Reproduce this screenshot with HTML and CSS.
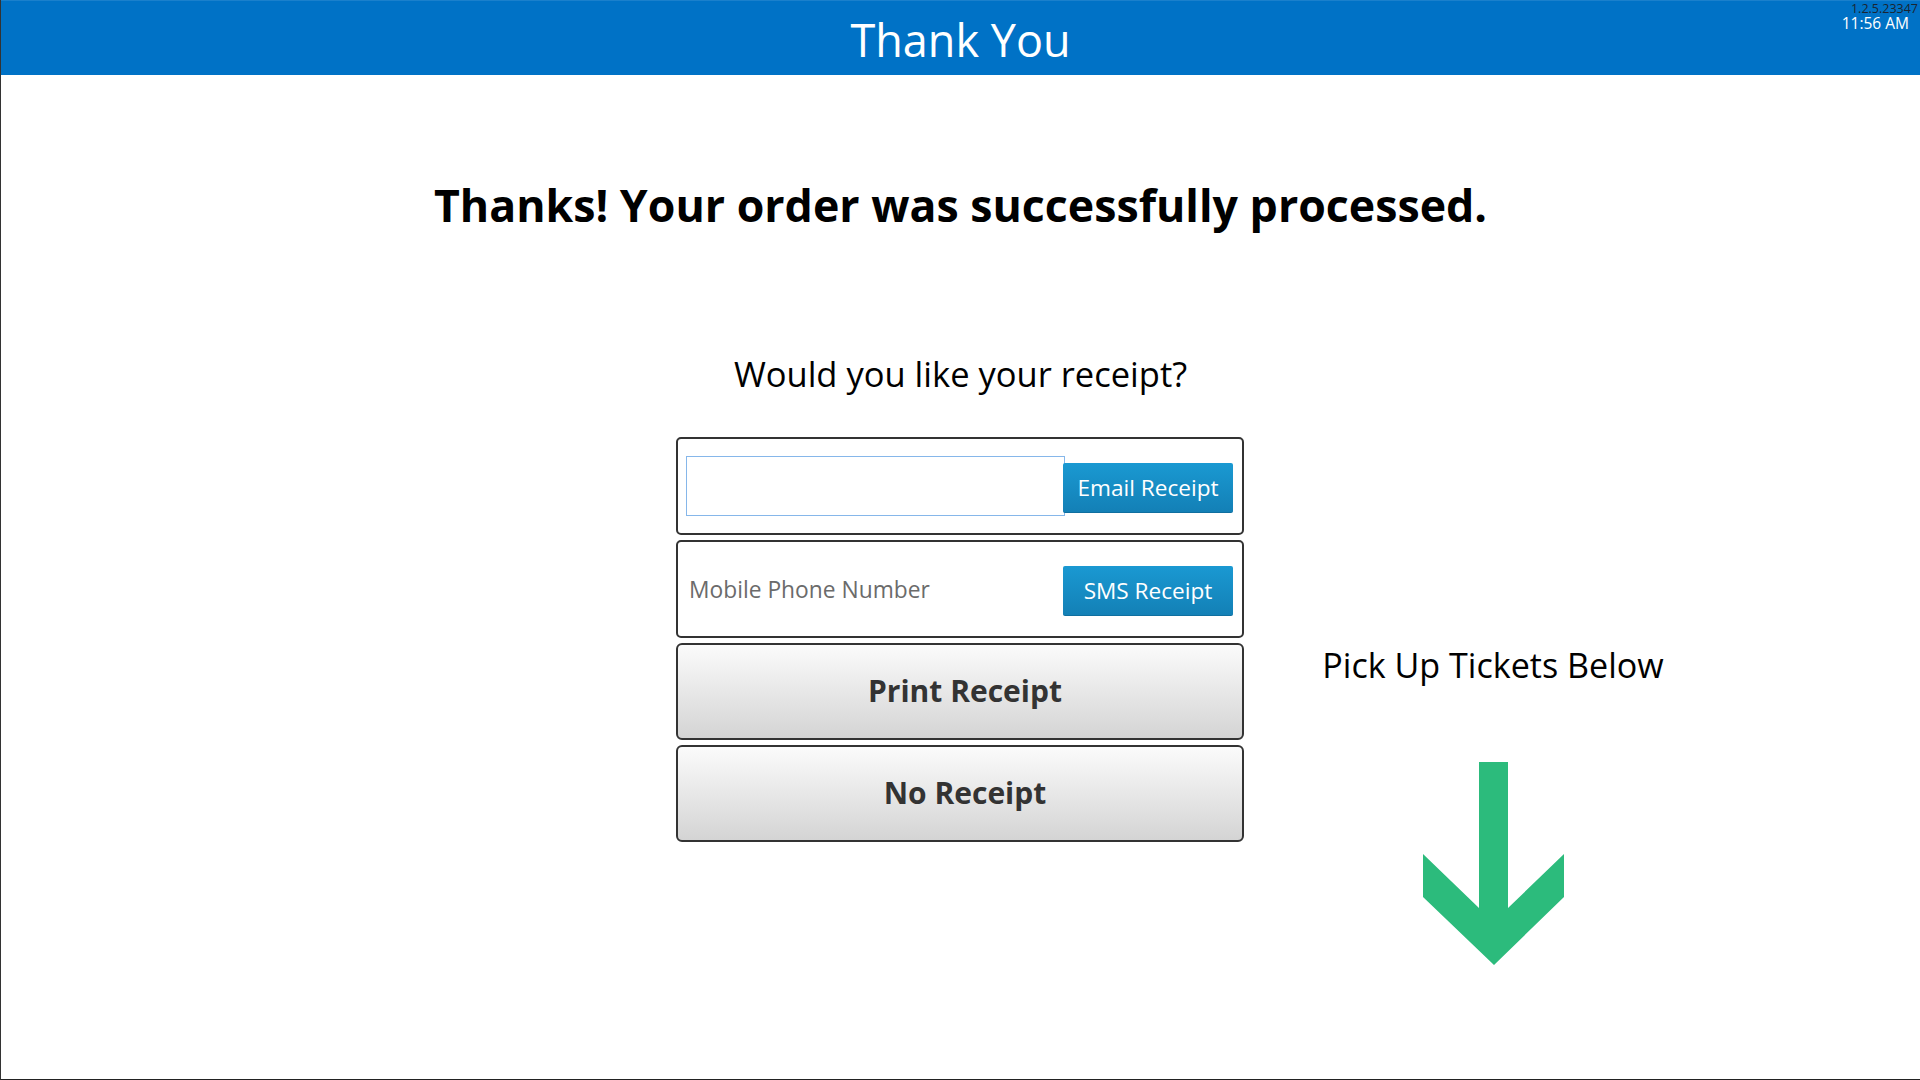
FILE: index.html
```html
<!DOCTYPE html>
<html lang="en">
<head>
<meta charset="utf-8">
<title>Thank You</title>
<link rel="stylesheet" href="styles.css">
</head>
<body>
<div class="screen">
  <header class="topbar">
    <h1 class="topbar-title">Thank You</h1>
    <div class="meta">
      <div class="version">1.2.5.23347</div>
      <div class="clock">11:56 AM</div>
    </div>
  </header>
  <main class="content">
    <h2 class="headline">Thanks! Your order was successfully processed.</h2>
    <p class="question">Would you like your receipt?</p>
    <div class="options">
      <div class="receipt-col">
        <div class="field-box">
          <input class="field field-email" type="text" aria-label="Email">
          <button class="send-btn">Email Receipt</button>
        </div>
        <div class="field-box">
          <input class="field field-phone" type="text" placeholder="Mobile Phone Number">
          <button class="send-btn">SMS Receipt</button>
        </div>
        <button class="big-btn">Print Receipt</button>
        <button class="big-btn">No Receipt</button>
      </div>
      <div class="pickup">
        <div class="pickup-label">Pick Up Tickets Below</div>
        <svg class="pickup-arrow" width="141" height="203" viewBox="0 0 141 203">
          <polygon points="56,0 85,0 85,146 141,92 141,135 71,203 0,135 0,92 56,146" fill="#2cbb7c"/>
        </svg>
      </div>
    </div>
  </main>
</div>
</body>
</html>
```

FILE: styles.css
```css
* { box-sizing: border-box; }

html, body {
  margin: 0;
  padding: 0;
  background: #ffffff;
}

body {
  font-family: "Open Sans", "Noto Sans", sans-serif;
  color: #000;
}

.screen {
  width: 1920px;
  height: 1080px;
  border-left: 1px solid #333333;
  border-bottom: 1px solid #222222;
  position: relative;
  overflow: hidden;
}

.topbar {
  height: 75px;
  background: #0072c6;
  border-top: 1px solid #1a80cc;
  position: relative;
}

.topbar-title {
  margin: 0;
  padding-top: 16px;
  font-size: 45px;
  line-height: 1;
  font-weight: 400;
  color: #ffffff;
  text-align: center;
}

.meta {
  position: absolute;
  top: 1px;
  right: 2px;
  text-align: right;
}

.version {
  font-size: 12.5px;
  line-height: 13px;
  color: #1b2530;
}

.clock {
  font-size: 15.5px;
  line-height: 16px;
  color: #ffffff;
  margin-right: 9px;
}

.content {
  display: flex;
  flex-direction: column;
}

.headline {
  margin: 108px 0 0;
  font-size: 44.7px;
  line-height: 1;
  font-weight: 700;
  text-align: center;
  color: #000;
}

.question {
  margin: 129px 0 0;
  font-size: 34.5px;
  line-height: 1;
  text-align: center;
  color: #000;
}

.options {
  margin-top: 46px;
  padding-left: 675px;
  display: flex;
}

.receipt-col {
  width: 568px;
  display: flex;
  flex-direction: column;
  gap: 5px;
}

.field-box {
  height: 98px;
  border: 2px solid #333333;
  border-radius: 5px;
  display: flex;
  align-items: center;
  padding: 0 7px 0 8px;
}

.field {
  width: 379px;
  height: 60px;
  margin: 0;
  font-family: inherit;
  font-size: 22.8px;
  color: #333;
  background: #fff;
  outline: none;
}

.field-email {
  border: 1px solid #86b7ea;
  padding: 0 4px;
}

.field-phone {
  border: none;
  padding: 0 3px;
}

.field-phone::placeholder {
  color: #6b6b6b;
  opacity: 1;
}

.send-btn {
  width: 170px;
  height: 50px;
  margin: 4px 0 0 -2px;
  padding: 0;
  border: none;
  border-bottom: 1px solid #0f6f9f;
  border-radius: 2px;
  background: linear-gradient(#1a99d2, #1380b6);
  color: #ffffff;
  font-family: inherit;
  font-size: 22.6px;
}

.big-btn {
  height: 97px;
  border: 2px solid #333333;
  border-radius: 6px;
  background: linear-gradient(#fbfbfb, #d4d4d4);
  color: #333333;
  font-family: inherit;
  font-size: 30px;
  font-weight: 700;
  padding: 0 0 2px 10px;
}

.pickup {
  width: 498px;
  padding-top: 211px;
  display: flex;
  flex-direction: column;
  align-items: center;
}

.pickup-label {
  font-size: 34.1px;
  line-height: 1;
  color: #000;
}

.pickup-arrow {
  display: block;
  margin-top: 80px;
}
```
